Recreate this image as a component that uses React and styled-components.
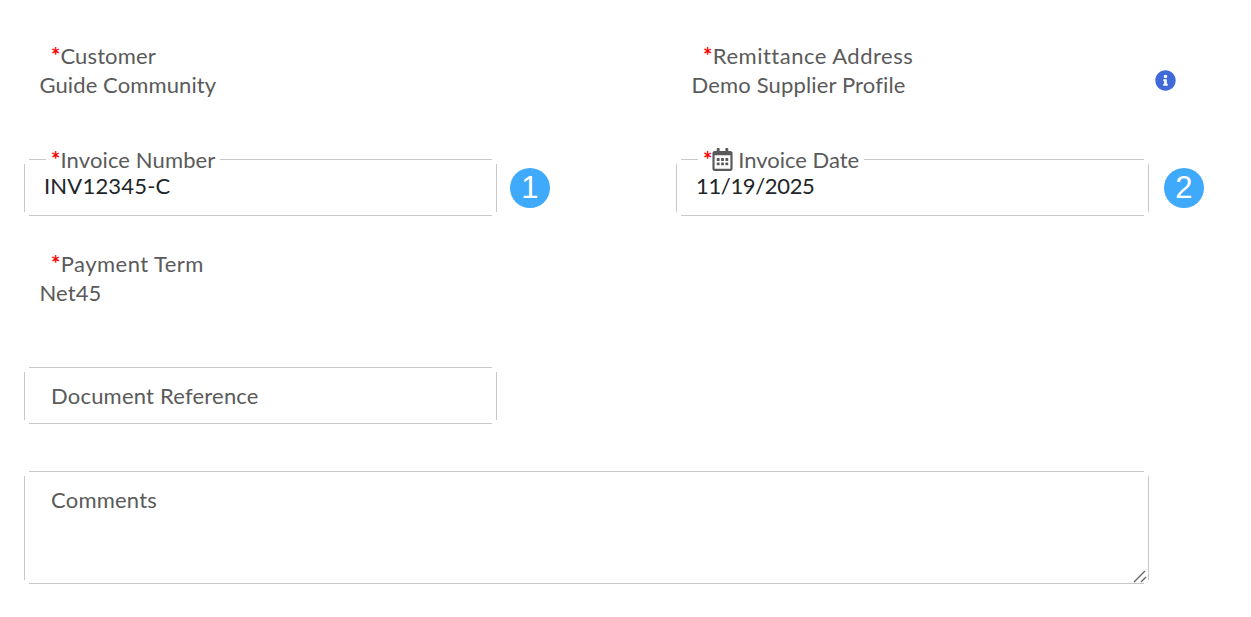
import styled, { createGlobalStyle } from "styled-components";
import { FaInfoCircle, FaRegCalendarAlt } from "react-icons/fa";

const GlobalStyle = createGlobalStyle`
  html, body {
    margin: 0;
    padding: 0;
    background: #fff;
    font-family: "Lato", "Noto Sans", sans-serif;
    font-size: 22px;
    font-variant-ligatures: none;
    letter-spacing: 0.12px;
    color: #5a5a5a;
  }
`;

const Page = styled.div`
  padding: 42px 0 33px 24px;
  display: flex;
  flex-direction: column;
`;

const Row = styled.div`
  display: grid;
  grid-template-columns: 652px 1fr;
  margin-bottom: ${(p) => p.$gap}px;
`;

const Cell = styled.div`
  display: flex;
  align-items: center;
  position: relative;
`;

const ReadOnly = styled.div`
  display: flex;
  flex-direction: column;
  width: 473px;
  height: 57px;
`;

const Label = styled.div`
  height: 29px;
  line-height: 28px;
  padding-left: 27px;
  letter-spacing: ${(p) => p.$spacing || 0.12}px;
`;

const Star = styled.span`
  color: #f00;
  font-weight: 700;
`;

const Value = styled.div`
  height: 28px;
  line-height: 28px;
  padding-left: 15.5px;
  letter-spacing: ${(p) => p.$spacing || 0.1}px;
`;

const InfoIcon = styled(FaInfoCircle)`
  color: #3f6ad8;
  font-size: 21px;
  position: absolute;
  left: 479px;
  top: 28px;
`;

const Box = styled.div`
  position: relative;
  width: ${(p) => p.$width}px;
  height: ${(p) => p.$height}px;
  box-sizing: border-box;
  flex: none;

  &::before {
    content: "";
    position: absolute;
    inset: 0 5px;
    border-top: 1px solid #c8c8c8;
    border-bottom: 1px solid #c8c8c8;
    pointer-events: none;
  }

  &::after {
    content: "";
    position: absolute;
    inset: 5px 0 4px;
    border-left: 1px solid #c8c8c8;
    border-right: 1px solid #c8c8c8;
    pointer-events: none;
  }
`;

const Legend = styled.span`
  position: absolute;
  left: 22px;
  top: -12px;
  height: 26px;
  line-height: 26px;
  padding: 0 5px;
  background: #fff;
  display: flex;
  align-items: center;
  z-index: 1;
  letter-spacing: ${(p) => p.$spacing || 0.12}px;
`;

const CalendarIcon = styled(FaRegCalendarAlt)`
  color: #5a5a5a;
  font-size: 23px;
  margin: -1px 4px 0 -1px;
`;

const Input = styled.input`
  display: block;
  width: 100%;
  height: 100%;
  box-sizing: border-box;
  border: 0;
  outline: 0;
  background: transparent;
  padding: ${(p) => (p.$plain ? "0 20px 0 27px" : "0 20px 5px 20px")};
  font: inherit;
  letter-spacing: ${(p) => p.$spacing || 0.2}px;
  color: #212529;

  &::placeholder {
    color: #5a5a5a;
    opacity: 1;
  }
`;

const TextArea = styled.textarea`
  display: block;
  width: 100%;
  height: 100%;
  box-sizing: border-box;
  border: 0;
  outline: 0;
  background: transparent;
  padding: 15px 27px;
  font: inherit;
  letter-spacing: 0.22px;
  line-height: 28px;
  color: #212529;
  resize: none;

  &::placeholder {
    color: #5a5a5a;
    opacity: 1;
  }
`;

const Grip = styled.svg`
  position: absolute;
  right: 2px;
  bottom: 1px;
  width: 14px;
  height: 14px;
`;

const Badge = styled.div`
  flex: none;
  width: 40px;
  height: 40px;
  margin-left: ${(p) => p.$offset}px;
  border-radius: 50%;
  background: #3fa9fc;
  color: #fff;
  font-family: "Liberation Sans", Arial, sans-serif;
  font-size: 31px;
  line-height: 40px;
  text-align: center;
`;

export default function App() {
  return (
    <Page>
      <GlobalStyle />
      <Row $gap={60}>
        <ReadOnly>
          <Label><Star>*</Star>Customer</Label>
          <Value>Guide Community</Value>
        </ReadOnly>
        <Cell>
          <ReadOnly>
            <Label $spacing={0.5}><Star>*</Star>Remittance Address</Label>
            <Value $spacing={0.15}>Demo Supplier Profile</Value>
          </ReadOnly>
          <InfoIcon />
        </Cell>
      </Row>
      <Row $gap={34}>
        <Cell>
          <Box $width={473} $height={57}>
            <Legend><Star>*</Star>Invoice Number</Legend>
            <Input defaultValue="INV12345-C" readOnly />
          </Box>
          <Badge $offset={13}>1</Badge>
        </Cell>
        <Cell>
          <Box $width={473} $height={57}>
            <Legend $spacing={-0.02}><Star>*</Star><CalendarIcon />Invoice Date</Legend>
            <Input defaultValue="11/19/2025" readOnly $spacing={-0.35} />
          </Box>
          <Badge $offset={15}>2</Badge>
        </Cell>
      </Row>
      <Row $gap={60}>
        <ReadOnly>
          <Label $spacing={0.45}><Star>*</Star>Payment Term</Label>
          <Value>Net45</Value>
        </ReadOnly>
      </Row>
      <Row $gap={47}>
        <Cell>
          <Box $width={473} $height={57}>
            <Input $plain placeholder="Document Reference" />
          </Box>
        </Cell>
      </Row>
      <Box $width={1125} $height={113}>
        <TextArea placeholder="Comments" />
        <Grip viewBox="0 0 14 14">
          <path d="M1 13 L12 2 M8 13 L13 8" stroke="#666" strokeWidth="1.4" fill="none" />
        </Grip>
      </Box>
    </Page>
  );
}
